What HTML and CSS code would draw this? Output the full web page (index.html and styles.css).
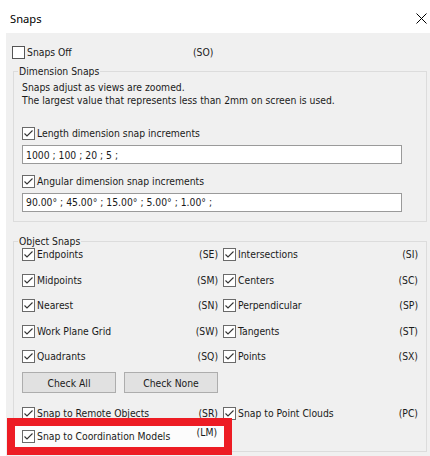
FILE: index.html
```html
<!DOCTYPE html>
<html lang="en">
<head>
  <meta charset="UTF-8">
  <meta name="viewport" content="width=device-width, initial-scale=1.0">
  <title>Snaps</title>
  <link rel="stylesheet" href="styles.css">
</head>
<body>
  <!-- Barra de titulo -->
  <div class="titlebar">
    <span class="title">Snaps</span>
    <svg class="close" width="11" height="11" viewBox="0 0 11 11">
      <path d="M0.5 0.5 L10.5 10.5 M10.5 0.5 L0.5 10.5" stroke="#000" stroke-width="1" fill="none"/>
    </svg>
  </div>

  <div class="dialog">
    <div class="snaps-off">
      <label class="check"><span class="box"></span>Snaps Off</label>
      <span class="code">(SO)</span>
    </div>

    <!-- Dimension snaps -->
    <div class="group dim">
      <div class="caption">Dimension Snaps</div>
      <p class="note"><span>Snaps adjust as views are zoomed.</span><span>The largest value that represents less than 2mm on screen is used.</span></p>
      <label class="check row-top"><span class="box on"></span>Length dimension snap increments</label>
      <input class="field" type="text" value="1000 ; 100 ; 20 ; 5 ;">
      <label class="check row-top2"><span class="box on"></span>Angular dimension snap increments</label>
      <input class="field" type="text" value="90.00° ; 45.00° ; 15.00° ; 5.00° ; 1.00° ;">
    </div>

    <!-- Object snaps -->
    <div class="group obj">
      <div class="caption">Object Snaps</div>
      <div class="grid">
        <div class="item"><label class="check"><span class="box on"></span>Endpoints</label><span class="code">(SE)</span></div>
        <div class="item"><label class="check"><span class="box on"></span>Intersections</label><span class="code">(SI)</span></div>
        <div class="item"><label class="check"><span class="box on"></span>Midpoints</label><span class="code">(SM)</span></div>
        <div class="item"><label class="check"><span class="box on"></span>Centers</label><span class="code">(SC)</span></div>
        <div class="item"><label class="check"><span class="box on"></span>Nearest</label><span class="code">(SN)</span></div>
        <div class="item"><label class="check"><span class="box on"></span>Perpendicular</label><span class="code">(SP)</span></div>
        <div class="item"><label class="check"><span class="box on"></span>Work Plane Grid</label><span class="code">(SW)</span></div>
        <div class="item"><label class="check"><span class="box on"></span>Tangents</label><span class="code">(ST)</span></div>
        <div class="item"><label class="check"><span class="box on"></span>Quadrants</label><span class="code">(SQ)</span></div>
        <div class="item"><label class="check"><span class="box on"></span>Points</label><span class="code">(SX)</span></div>
      </div>

      <div class="buttons">
        <button class="btn">Check All</button>
        <button class="btn">Check None</button>
      </div>

      <div class="grid extra">
        <div class="item"><label class="check"><span class="box on"></span>Snap to Remote Objects</label><span class="code">(SR)</span></div>
        <div class="item"><label class="check"><span class="box on"></span>Snap to Point Clouds</label><span class="code">(PC)</span></div>
      </div>

      <!-- Opcion resaltada con recuadro rojo -->
      <div class="item highlight"><label class="check"><span class="box on"></span>Snap to Coordination Models</label><span class="code">(LM)</span></div>
    </div>
  </div>
</body>
</html>
```

FILE: styles.css
```css
/* Cuerpo */
body {
  margin: 0;
  background: #fff;
  font-family: "DejaVu Sans Condensed", "Liberation Sans", sans-serif;
  font-size: 10.3px;
  color: #1a1a1a;
  width: 430px;
  height: 456px;
  overflow: hidden;
}

/* Barra de titulo */
.titlebar {
  height: 33px;
  display: flex;
  align-items: center;
  justify-content: space-between;
  padding: 3px 3px 0 10px;
  box-sizing: border-box;
}

.title {
  font-family: "Noto Sans", sans-serif;
  font-size: 11.2px;
  color: #000;
}

/* Cuerpo del dialogo */
.dialog {
  background: #f0f0f0;
  margin-left: 6px;
  padding: 12px 3px 0 6px;
  height: 423px;
  box-sizing: border-box;
}

.snaps-off {
  display: grid;
  grid-template-columns: 181px auto;
  height: 14px;
  align-items: center;
}

/* Casillas */
.check {
  display: flex;
  align-items: center;
  height: 14px;
  line-height: 13px;
  white-space: nowrap;
}

.box {
  width: 13px;
  height: 13px;
  box-sizing: border-box;
  border: 1px solid #555;
  background: #fff;
  margin-right: 2px;
  flex: none;
}

.box.on {
  border-color: #6a6a6a;
  background: #fff url("data:image/svg+xml,%3Csvg xmlns='http://www.w3.org/2000/svg' width='11' height='11'%3E%3Cpath d='M1.5 5.5 L4 8 L9.5 2.5' stroke='%23333' stroke-width='1.1' fill='none'/%3E%3C/svg%3E") no-repeat center;
}

.code {
  line-height: 13px;
}

/* Grupos (cuadro con titulo sobre el borde) */
.group {
  margin-left: 1px;
  width: 414px;
  box-sizing: border-box;
  border: 1px solid #dcdcdc;
  padding: 0 0 0 8px;
}

.caption {
  width: fit-content;
  margin: -7px 0 0 -4px;
  padding: 0 1px;
  line-height: 13px;
  background: #f0f0f0;
}

.dim {
  margin-top: 12px;
  padding-bottom: 9px;
}

.note {
  margin: 2.5px 0 0;
  line-height: 13px;
}

.note span {
  display: block;
  height: 13px;
}

.row-top {
  margin-top: 20px;
}

.row-top2 {
  margin-top: 10px;
}

.field {
  display: block;
  width: 380px;
  height: 19px;
  box-sizing: border-box;
  margin: 4.5px 0 0;
  border: 1px solid #9a9a9a;
  background: #fff;
  padding: 0 3px;
  font: inherit;
  color: #1a1a1a;
}

.obj {
  margin-top: 19px;
  padding-bottom: 4px;
}

/* Rejilla de opciones */
.grid {
  display: grid;
  grid-template-columns: 196px 195px;
  column-gap: 5px;
  row-gap: 11.6px;
}

.item {
  display: flex;
  align-items: center;
  height: 14px;
}

.item .code {
  margin-left: auto;
}

.buttons {
  display: flex;
  gap: 8px;
  margin-top: 8.6px;
}

.btn {
  width: 94px;
  height: 21px;
  background: #e1e1e1;
  border: 1px solid #adadad;
  font: inherit;
  color: #1a1a1a;
  padding: 0;
}

.extra {
  margin-top: 13px;
}

/* Recuadro rojo */
.highlight {
  margin: -2px 0 -8px -15px;
  width: 225px;
  height: 37px;
  padding: 0 7px;
  box-sizing: border-box;
  background: #fcfcfc;
  border: 8px solid #ed1c24;
  position: relative;
}

.highlight .code {
  align-self: flex-start;
}
```
